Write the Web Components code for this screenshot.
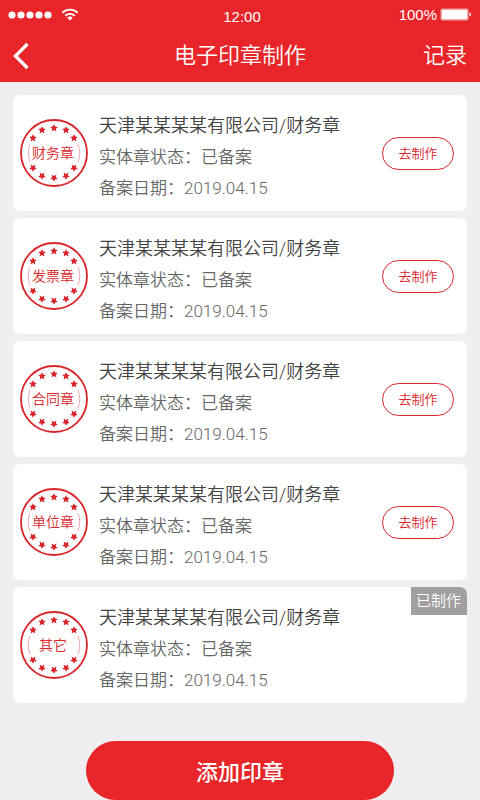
<!DOCTYPE html>
<html lang="zh-CN">
<head>
<meta charset="utf-8">
<meta name="viewport" content="width=device-width, initial-scale=1">
<title>电子印章制作</title>
<style>
:root {
    --red: #e82629;
    --seal: #d9262b;
    --page: #f0eef0;
    --badge: #a19fa1;
}

body {
    margin: 0;
    background: var(--page);
    font-family: Roboto, "Noto Sans CJK SC", sans-serif;
    font-weight: 350;
}
</style>
</head>
<body>
<seal-page>
    <status-bar slot="top">
        <span slot="time">12:00</span>
        <span slot="battery">100%</span>
    </status-bar>
    <nav-bar slot="top">
        电子印章制作
        <span slot="action">记录</span>
    </nav-bar>
    <seal-card seal="财务章" action="去制作">
        <span slot="title">天津某某某某有限公司/财务章</span>
        <span slot="state">实体章状态：已备案</span>
        <span slot="date">备案日期：2019.04.15</span>
    </seal-card>
    <seal-card seal="发票章" action="去制作">
        <span slot="title">天津某某某某有限公司/财务章</span>
        <span slot="state">实体章状态：已备案</span>
        <span slot="date">备案日期：2019.04.15</span>
    </seal-card>
    <seal-card seal="合同章" action="去制作">
        <span slot="title">天津某某某某有限公司/财务章</span>
        <span slot="state">实体章状态：已备案</span>
        <span slot="date">备案日期：2019.04.15</span>
    </seal-card>
    <seal-card seal="单位章" action="去制作">
        <span slot="title">天津某某某某有限公司/财务章</span>
        <span slot="state">实体章状态：已备案</span>
        <span slot="date">备案日期：2019.04.15</span>
    </seal-card>
    <seal-card seal="其它" badge="已制作">
        <span slot="title">天津某某某某有限公司/财务章</span>
        <span slot="state">实体章状态：已备案</span>
        <span slot="date">备案日期：2019.04.15</span>
    </seal-card>
    <add-button slot="bottom">添加印章</add-button>
</seal-page>

<script>
function makeTemplate(html) {
    const template = document.createElement('template');
    template.innerHTML = html;
    return template;
}

class BaseElement extends HTMLElement {
    constructor() {
        super();
        this.attachShadow({ mode: 'open' });
        this.shadowRoot.appendChild(this.constructor.template.content.cloneNode(true));
    }
}

class SealPage extends BaseElement {
    static template = makeTemplate(`
<style>
:host {
    display: block;
}

.page__list {
    display: flex;
    flex-direction: column;
    gap: 7px;
    padding: 13px;
}

.page__bottom {
    display: flex;
    justify-content: center;
    padding-top: 25px;
}

header {
    background: var(--red);
    color: #fff;
}
</style>
<header><slot name="top"></slot></header>
<main class="page__list"><slot></slot></main>
<footer class="page__bottom"><slot name="bottom"></slot></footer>
`);
}

class StatusBar extends BaseElement {
    static template = makeTemplate(`
<style>
:host {
    display: grid;
    grid-template-columns: 1fr auto 1fr;
    align-items: center;
    height: 29px;
    padding: 0 8px;
    font: 400 15px/20px "Liberation Sans", sans-serif;
}

svg {
    display: block;
    fill: currentColor;
}

.status__signal,
.status__power {
    display: flex;
    align-items: center;
}

.status__signal {
    gap: 9px;
}

.status__power {
    justify-content: flex-end;
    gap: 3px;
}

.status__time {
    padding: 5px 0 0 4px;
}
</style>
<div class="status__signal">
    <svg width="44" height="8" viewBox="0 0 44 8">
        <circle cx="4" cy="4" r="3.6"/>
        <circle cx="13" cy="4" r="3.6"/>
        <circle cx="22" cy="4" r="3.6"/>
        <circle cx="31" cy="4" r="3.6"/>
        <circle cx="40" cy="4" r="3.6"/>
    </svg>
    <svg width="18" height="13" viewBox="0 0 18 13">
        <path d="M1.3 4.8a11 11 0 0 1 15.4 0M4.2 7.8a7 7 0 0 1 9.6 0" fill="none" stroke="currentColor" stroke-width="1.9"/>
        <path d="M6.2 9.8a4 4 0 0 1 5.6 0L9 12.6z"/>
    </svg>
</div>
<div class="status__time"><slot name="time"></slot></div>
<div class="status__power">
    <slot name="battery"></slot>
    <svg width="32" height="13" viewBox="0 0 32 13">
        <rect x="0.5" y="0.5" width="28" height="12" rx="2" fill="#f6a6a7"/>
        <rect x="2" y="2" width="25" height="9" rx="1"/>
        <path d="M29.5 4.5c2 .6 2 3.4 0 4z"/>
    </svg>
</div>
`);
}

class NavBar extends BaseElement {
    static template = makeTemplate(`
<style>
:host {
    display: grid;
    grid-template-columns: 1fr auto 1fr;
    align-items: center;
    height: 53px;
    padding: 0 13px;
    font-size: 22px;
    line-height: 32px;
}

h1 {
    margin: 0;
    font: inherit;
}

button,
a {
    padding: 0;
    border: 0;
    background: none;
    color: inherit;
    font: inherit;
    text-decoration: none;
}

.nav__back {
    justify-self: start;
}

.nav__action {
    justify-self: end;
}

svg {
    display: block;
}
</style>
<button class="nav__back" aria-label="返回">
    <svg width="16" height="28" viewBox="0 0 16 28">
        <path d="M14.5 2L2.5 14l12 12" fill="none" stroke="currentColor" stroke-width="3.4"/>
    </svg>
</button>
<h1><slot></slot></h1>
<a class="nav__action" href="#records"><slot name="action"></slot></a>
`);
}

// five-pointed star centred on 0,0
const STAR = 'M0-3.8L1.2-1.4 3.8-1.1 1.8.7 2.4 3.4 0 2.1-2.4 3.4-1.8.7-3.8-1.1-1.2-1.4z';
const STAR_SPOTS = [[-21, -15], [-12, -23], [0, -25], [12, -23], [20, -15]];

function drawStars() {
    return STAR_SPOTS.map(([x, y]) => `
        <path d="${STAR}" transform="translate(${x} ${y})"/>
        <path d="${STAR}" transform="translate(${x} ${-y}) rotate(180)"/>`).join('');
}

class SealStamp extends BaseElement {
    static template = makeTemplate(`
<style>
:host {
    display: grid;
    place-items: center;
    flex: none;
    color: var(--seal);
    font-size: 14px;
    line-height: 20px;
}

svg,
span {
    grid-area: 1 / 1;
}

span {
    padding-right: 2px;
}

svg {
    display: block;
    fill: currentColor;
}
</style>
<svg width="68" height="68" viewBox="-34 -34 68 68">
    <circle r="33" fill="none" stroke="currentColor" stroke-width="1.8"/>
    <path d="M-24-9q-3.5 9 0 18M24-9q3.5 9 0 18" fill="none" stroke="currentColor" stroke-width=".5" opacity=".8"/>
    ${drawStars()}
</svg>
<span><slot></slot></span>
`);
}

class SealCard extends BaseElement {
    static template = makeTemplate(`
<style>
:host {
    display: flex;
    align-items: center;
    position: relative;
    padding: 0 13px 0 7px;
    border-radius: 7px;
    background: #fff;
}

.card__text {
    flex: 1;
    padding: 15px 0 7px 11px;
    color: #666;
    font-size: 17px;
    line-height: 31px;
}

h2,
p {
    margin: 0;
}

h2 {
    color: #444;
    font-size: 18px;
    font-weight: inherit;
    line-height: 32px;
}

button {
    flex: none;
    width: 72px;
    height: 33px;
    padding: 0 0 2px;
    border: 1px solid var(--seal);
    border-radius: 17px;
    background: none;
    color: var(--seal);
    font: inherit;
    font-size: 13px;
}

.card__badge {
    position: absolute;
    top: 0;
    right: 0;
    padding: 0 6px 0 5px;
    border-top-right-radius: 7px;
    background: var(--badge);
    color: #fff;
    font-size: 15px;
    line-height: 28px;
}

[hidden] {
    display: none;
}
</style>
<seal-stamp></seal-stamp>
<div class="card__text">
    <h2><slot name="title"></slot></h2>
    <p><slot name="state"></slot></p>
    <p><slot name="date"></slot></p>
</div>
<button hidden></button>
<span class="card__badge" hidden></span>
`);

    connectedCallback() {
        this.shadowRoot.querySelector('seal-stamp').textContent = this.getAttribute('seal');
        this.fill('button', 'action');
        this.fill('.card__badge', 'badge');
    }

    fill(selector, name) {
        const node = this.shadowRoot.querySelector(selector);
        node.textContent = this.getAttribute(name);
        node.hidden = !this.hasAttribute(name);
    }
}

class AddButton extends BaseElement {
    static template = makeTemplate(`
<style>
:host {
    display: block;
    width: 64%;
}

button {
    width: 100%;
    height: 59px;
    padding: 0 0 2px;
    border: 0;
    border-radius: 30px;
    background: var(--red);
    color: #fff;
    font: inherit;
    font-size: 22px;
    font-weight: 500;
}
</style>
<button><slot></slot></button>
`);
}

customElements.define('seal-page', SealPage);
customElements.define('status-bar', StatusBar);
customElements.define('nav-bar', NavBar);
customElements.define('seal-stamp', SealStamp);
customElements.define('seal-card', SealCard);
customElements.define('add-button', AddButton);
</script>
</body>
</html>
